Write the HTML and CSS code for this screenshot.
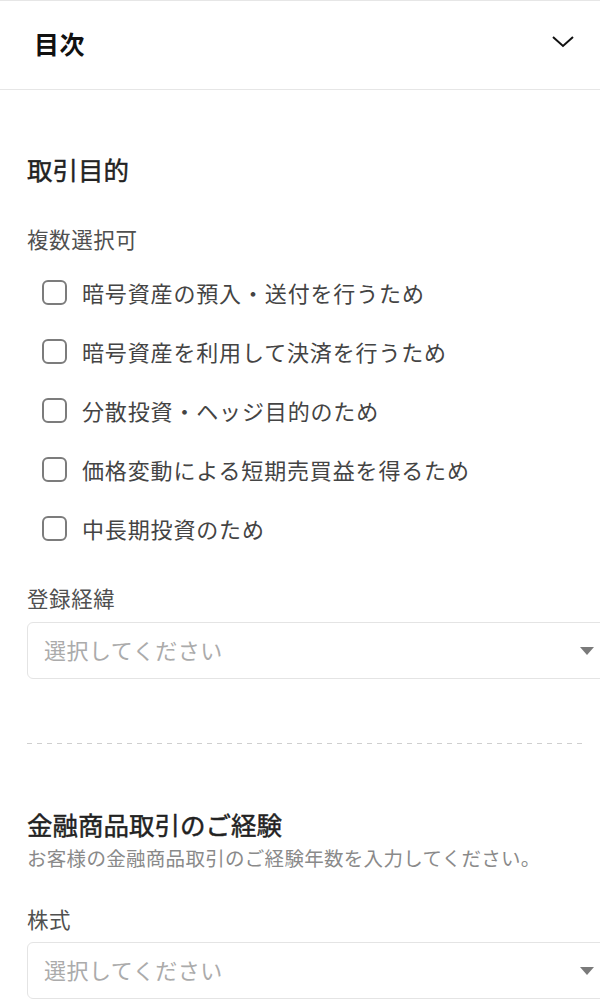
FILE: index.html
```html
<!DOCTYPE html>
<html lang="ja">
<head>
<meta charset="utf-8">
<title>目次</title>
<link rel="stylesheet" href="styles.css">
</head>
<body>
<div class="toc">
  <span class="toc-title">目次</span>
  <svg class="chev" width="24" height="14" viewBox="0 0 24 14"><path d="M2 2 L12 11 L22 2" fill="none" stroke="#111" stroke-width="2"/></svg>
</div>
<main class="content">
  <section class="sec sec-first">
    <h2 class="sec-title">取引目的</h2>
    <div class="label">複数選択可</div>
    <ul class="checks">
      <li class="check"><span class="box"></span><span class="ctext">暗号資産の預入・送付を行うため</span></li>
      <li class="check"><span class="box"></span><span class="ctext">暗号資産を利用して決済を行うため</span></li>
      <li class="check"><span class="box"></span><span class="ctext">分散投資・ヘッジ目的のため</span></li>
      <li class="check"><span class="box"></span><span class="ctext">価格変動による短期売買益を得るため</span></li>
      <li class="check"><span class="box"></span><span class="ctext">中長期投資のため</span></li>
    </ul>
    <div class="label label-reg">登録経緯</div>
    <div class="select"><span class="ph">選択してください</span><span class="tri"></span></div>
  </section>
  <div class="dash"></div>
  <section class="sec sec-second">
    <h2 class="sec-title">金融商品取引のご経験</h2>
    <p class="desc">お客様の金融商品取引のご経験年数を入力してください。</p>
    <div class="label label-stock">株式</div>
    <div class="select"><span class="ph">選択してください</span><span class="tri"></span></div>
  </section>
</main>
</body>
</html>
```
FILE: styles.css
```css
html, body {
  margin: 0;
  padding: 0;
  background: #fff;
  overflow: hidden;
}
body {
  font-family: "Noto Sans CJK JP", "Noto Sans", sans-serif;
  color: #222;
  width: 600px;
}
.toc {
  height: 88px;
  border-top: 1px solid #e6e6e6;
  border-bottom: 1px solid #e6e6e6;
  display: flex;
  align-items: center;
  justify-content: space-between;
  padding: 0 25px 0 34px;
}
.toc-title {
  font-size: 25px;
  font-weight: 700;
  color: #111;
  letter-spacing: 0.5px;
  line-height: 30px;
  margin-top: -4px;
}
.chev {
  display: block;
  margin-top: -6px;
}
.content {
  padding: 0 15px 0 27px;
}
.sec-title {
  margin: 0;
  font-size: 25.5px;
  font-weight: 400;
  -webkit-text-stroke: 0.45px #222;
  line-height: 36px;
  color: #222;
}
.sec-first {
  padding-top: 61px;
}
.label {
  font-size: 21.5px;
  line-height: 30px;
  color: #505050;
  letter-spacing: 0.6px;
  margin-top: 37px;
}
.checks {
  list-style: none;
  margin: 23px 0 0;
  padding: 0 0 0 15px;
  display: flex;
  flex-direction: column;
  gap: 29px;
}
.check {
  display: flex;
  align-items: center;
  height: 30px;
  gap: 15px;
}
.box {
  width: 21px;
  height: 21px;
  border: 2px solid #7c7c7c;
  border-radius: 6px;
  flex: none;
}
.ctext {
  font-size: 22px;
  line-height: 30px;
  color: #444;
  letter-spacing: 0.85px;
}
.label-reg {
  margin-top: 40px;
}
.select {
  margin-top: 9px;
  width: 589px;
  height: 57px;
  border: 1px solid #e4e4e4;
  border-radius: 6px;
  box-sizing: border-box;
  display: flex;
  align-items: center;
  padding: 0 0 3px 16px;
  position: relative;
}
.ph {
  font-size: 22px;
  color: #ababab;
  letter-spacing: 0.5px;
  line-height: 30px;
}
.tri {
  position: absolute;
  right: 21px;
  top: 24px;
  width: 0;
  height: 0;
  border-left: 7px solid transparent;
  border-right: 7px solid transparent;
  border-top: 8px solid #7a7a7a;
}
.dash {
  margin-top: 64px;
  height: 1px;
  background: repeating-linear-gradient(to right, #cfcfcf 0 5px, transparent 5px 10px);
}
.sec-second {
  padding-top: 62px;
}
.desc {
  margin: 3px 0 0;
  font-size: 19.5px;
  line-height: 26px;
  color: #8a8a8a;
  letter-spacing: 0.3px;
}
.label-stock {
  margin-top: 33px;
}
.sec-second .select {
  margin-top: 8px;
}
```
